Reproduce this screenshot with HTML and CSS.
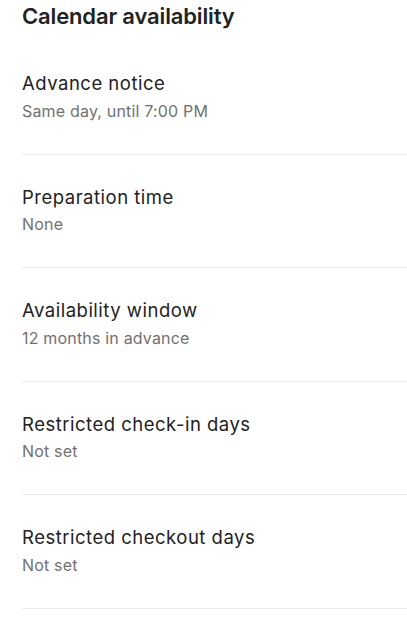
FILE: index.html
```html
<!DOCTYPE html>
<html lang="en">
<head>
<meta charset="utf-8">
<title>Calendar availability</title>
<link rel="stylesheet" href="styles.css">
</head>
<body>
<main class="page">
  <h1 class="title">Calendar availability</h1>
  <ul class="settings">
    <li class="item">
      <div class="label">Advance notice</div>
      <div class="value">Same day, until 7:00 PM</div>
    </li>
    <li class="item">
      <div class="label">Preparation time</div>
      <div class="value">None</div>
    </li>
    <li class="item">
      <div class="label">Availability window</div>
      <div class="value">12 months in advance</div>
    </li>
    <li class="item">
      <div class="label">Restricted check-in days</div>
      <div class="value">Not set</div>
    </li>
    <li class="item">
      <div class="label">Restricted checkout days</div>
      <div class="value">Not set</div>
    </li>
  </ul>
</main>
</body>
</html>
```
FILE: styles.css
```css
html, body {
  margin: 0;
  padding: 0;
  background: #ffffff;
}
body {
  font-family: Inter, "Noto Sans", sans-serif;
  color: #222222;
}
.page {
  padding-left: 22px;
}
.title {
  margin: 0 0 12.5px 0;
  padding-top: 3px;
  font-size: 22px;
  line-height: 26px;
  font-weight: 600;
  letter-spacing: -0.15px;
  color: #222222;
}
.settings {
  list-style: none;
  margin: 0;
  padding: 0;
}
.item {
  display: flex;
  flex-direction: column;
  gap: 5.5px;
  padding: 29.8px 0 33.2px 0;
  border-bottom: 1px solid #ebebeb;
}
.label {
  font-size: 18.5px;
  line-height: 24px;
  letter-spacing: 0.5px;
  color: #222222;
}
.value {
  font-size: 16px;
  line-height: 20px;
  letter-spacing: 0.18px;
  color: #717171;
}
```
